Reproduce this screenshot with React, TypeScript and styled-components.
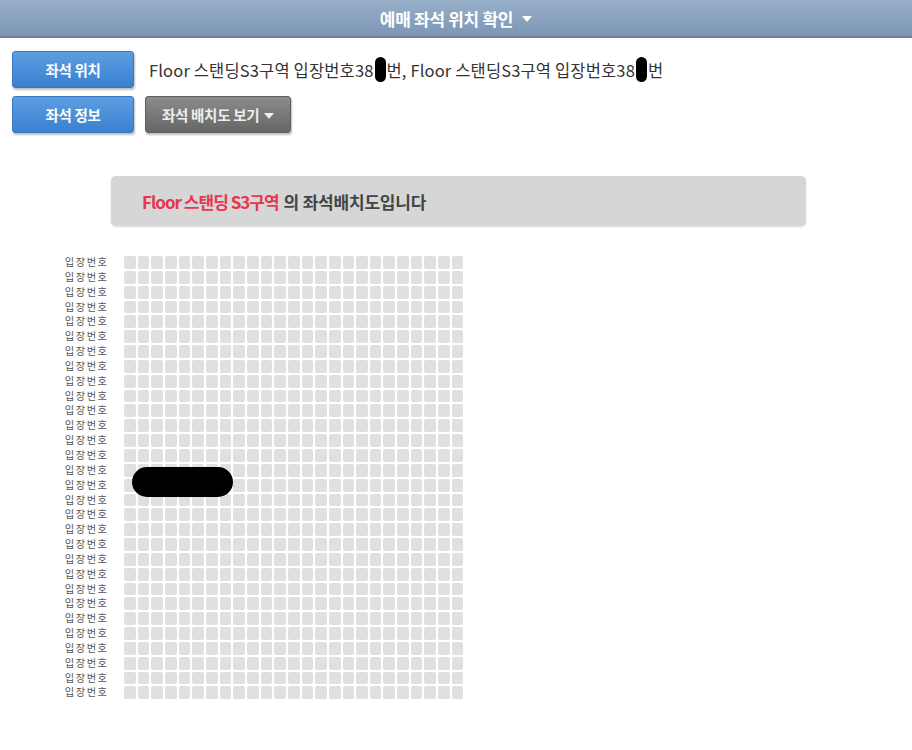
import styled, { createGlobalStyle } from "styled-components";

const GlobalStyle = createGlobalStyle`
	body {
		margin: 0;
		background: #fff;
		font-family: "Noto Sans CJK KR", "Noto Sans", sans-serif;
	}
`;

const ROWS = 30;
const COLS = 25;

const Page = styled.div`
	width: 912px;
	min-height: 750px;
	background: #fff;
`;

const TopBar = styled.div`
	height: 36px;
	display: flex;
	align-items: center;
	justify-content: center;
	gap: 9px;
	background: linear-gradient(#98afc8, #7c96b4);
	border-bottom: 2px solid #6f8299;
	color: #fff;
	font-size: 17px;
	font-weight: 700;
	letter-spacing: -0.3px;
`;

const Caret = styled.span`
	display: inline-block;
	width: 0;
	height: 0;
	border-left: 5px solid transparent;
	border-right: 5px solid transparent;
	border-top: 6px solid ${({ color }) => color || "#fff"};
	margin-top: 2px;
`;

const Controls = styled.div`
	padding: 13px 0 0 12px;
	display: flex;
	flex-direction: column;
	gap: 8px;
`;

const Row = styled.div`
	display: flex;
	align-items: center;
	gap: 11px;
`;

const Button = styled.div<{ $variant?: "blue" | "gray" }>`
	height: 37px;
	box-sizing: border-box;
	padding: 0 16px;
	min-width: 122px;
	display: flex;
	align-items: center;
	justify-content: center;
	gap: 5px;
	border-radius: 3px;
	font-size: 14.5px;
	font-weight: 700;
	letter-spacing: -0.3px;
	color: ${({ $variant }) => ($variant === "gray" ? "#eee" : "#fff")};
	background: ${({ $variant }) =>
		$variant === "gray"
			? "linear-gradient(#8c8c8c, #666)"
			: "linear-gradient(#5b9ee2, #3b80cf)"};
	border: 1px solid ${({ $variant }) => ($variant === "gray" ? "#5e5e5e" : "#3a79c2")};
	box-shadow: 1px 2px 2px rgba(0, 0, 0, 0.25);
`;

const SeatText = styled.div`
	font-size: 16.5px;
	color: #333;
	letter-spacing: 0.15px;
	padding-left: 4px;
	display: flex;
	align-items: center;
	white-space: pre;
`;

const Redact = styled.span`
	display: inline-block;
	width: 11px;
	height: 25px;
	border-radius: 6px;
	background: #000;
	margin: 0 1px;
`;

const Banner = styled.div`
	margin: 43px 0 0 111px;
	width: 695px;
	height: 50px;
	box-sizing: border-box;
	padding-left: 31px;
	display: flex;
	align-items: center;
	background: #d6d6d6;
	border-radius: 5px;
	box-shadow: 0 1px 2px rgba(0, 0, 0, 0.15);
	font-size: 17px;
	font-weight: 700;
	letter-spacing: -0.2px;
	color: #454545;
`;

const Red = styled.span`
	color: #e8364f;
	letter-spacing: -1px;
	margin-right: 5px;
`;

const SeatMap = styled.div`
	position: relative;
	margin: 30px 0 0 58px;
	display: flex;
	gap: 17px;
`;

const Labels = styled.div`
	display: grid;
	grid-auto-rows: 12.85px;
	row-gap: 2px;
	width: 49px;
	text-align: right;
	font-size: 10.2px;
	color: #555;
	letter-spacing: 1.6px;
`;

const Label = styled.div`
	line-height: 12.85px;
	margin-right: -1.6px;
`;

const Seats = styled.div`
	display: grid;
	grid-template-columns: repeat(${COLS}, 11.67px);
	grid-auto-rows: 12.85px;
	gap: 2px;
`;

const Seat = styled.div`
	background: #e0e0e0;
	border-radius: 2px;
`;

const Blot = styled.div`
	position: absolute;
	left: 74px;
	top: 211px;
	width: 101px;
	height: 30px;
	border-radius: 15px;
	background: #000;
`;

export default function App() {
	return (
		<Page>
			<GlobalStyle />
			<TopBar>
				예매 좌석 위치 확인 <Caret />
			</TopBar>

			<Controls>
				<Row>
					<Button>좌석 위치</Button>
					<SeatText>
						Floor 스탠딩S3구역 입장번호38<Redact />번, Floor 스탠딩S3구역 입장번호38<Redact />번
					</SeatText>
				</Row>
				<Row>
					<Button>좌석 정보</Button>
					<Button $variant="gray">
						좌석 배치도 보기 <Caret color="#eee" />
					</Button>
				</Row>
			</Controls>

			<Banner>
				<Red>Floor 스탠딩 S3구역</Red>의 좌석배치도입니다
			</Banner>

			<SeatMap>
				<Labels>
					{Array.from({ length: ROWS }, (_, i) => (
						<Label key={i}>입장번호</Label>
					))}
				</Labels>
				<Seats>
					{Array.from({ length: ROWS * COLS }, (_, i) => (
						<Seat key={i} />
					))}
				</Seats>
				<Blot />
			</SeatMap>
		</Page>
	);
}
